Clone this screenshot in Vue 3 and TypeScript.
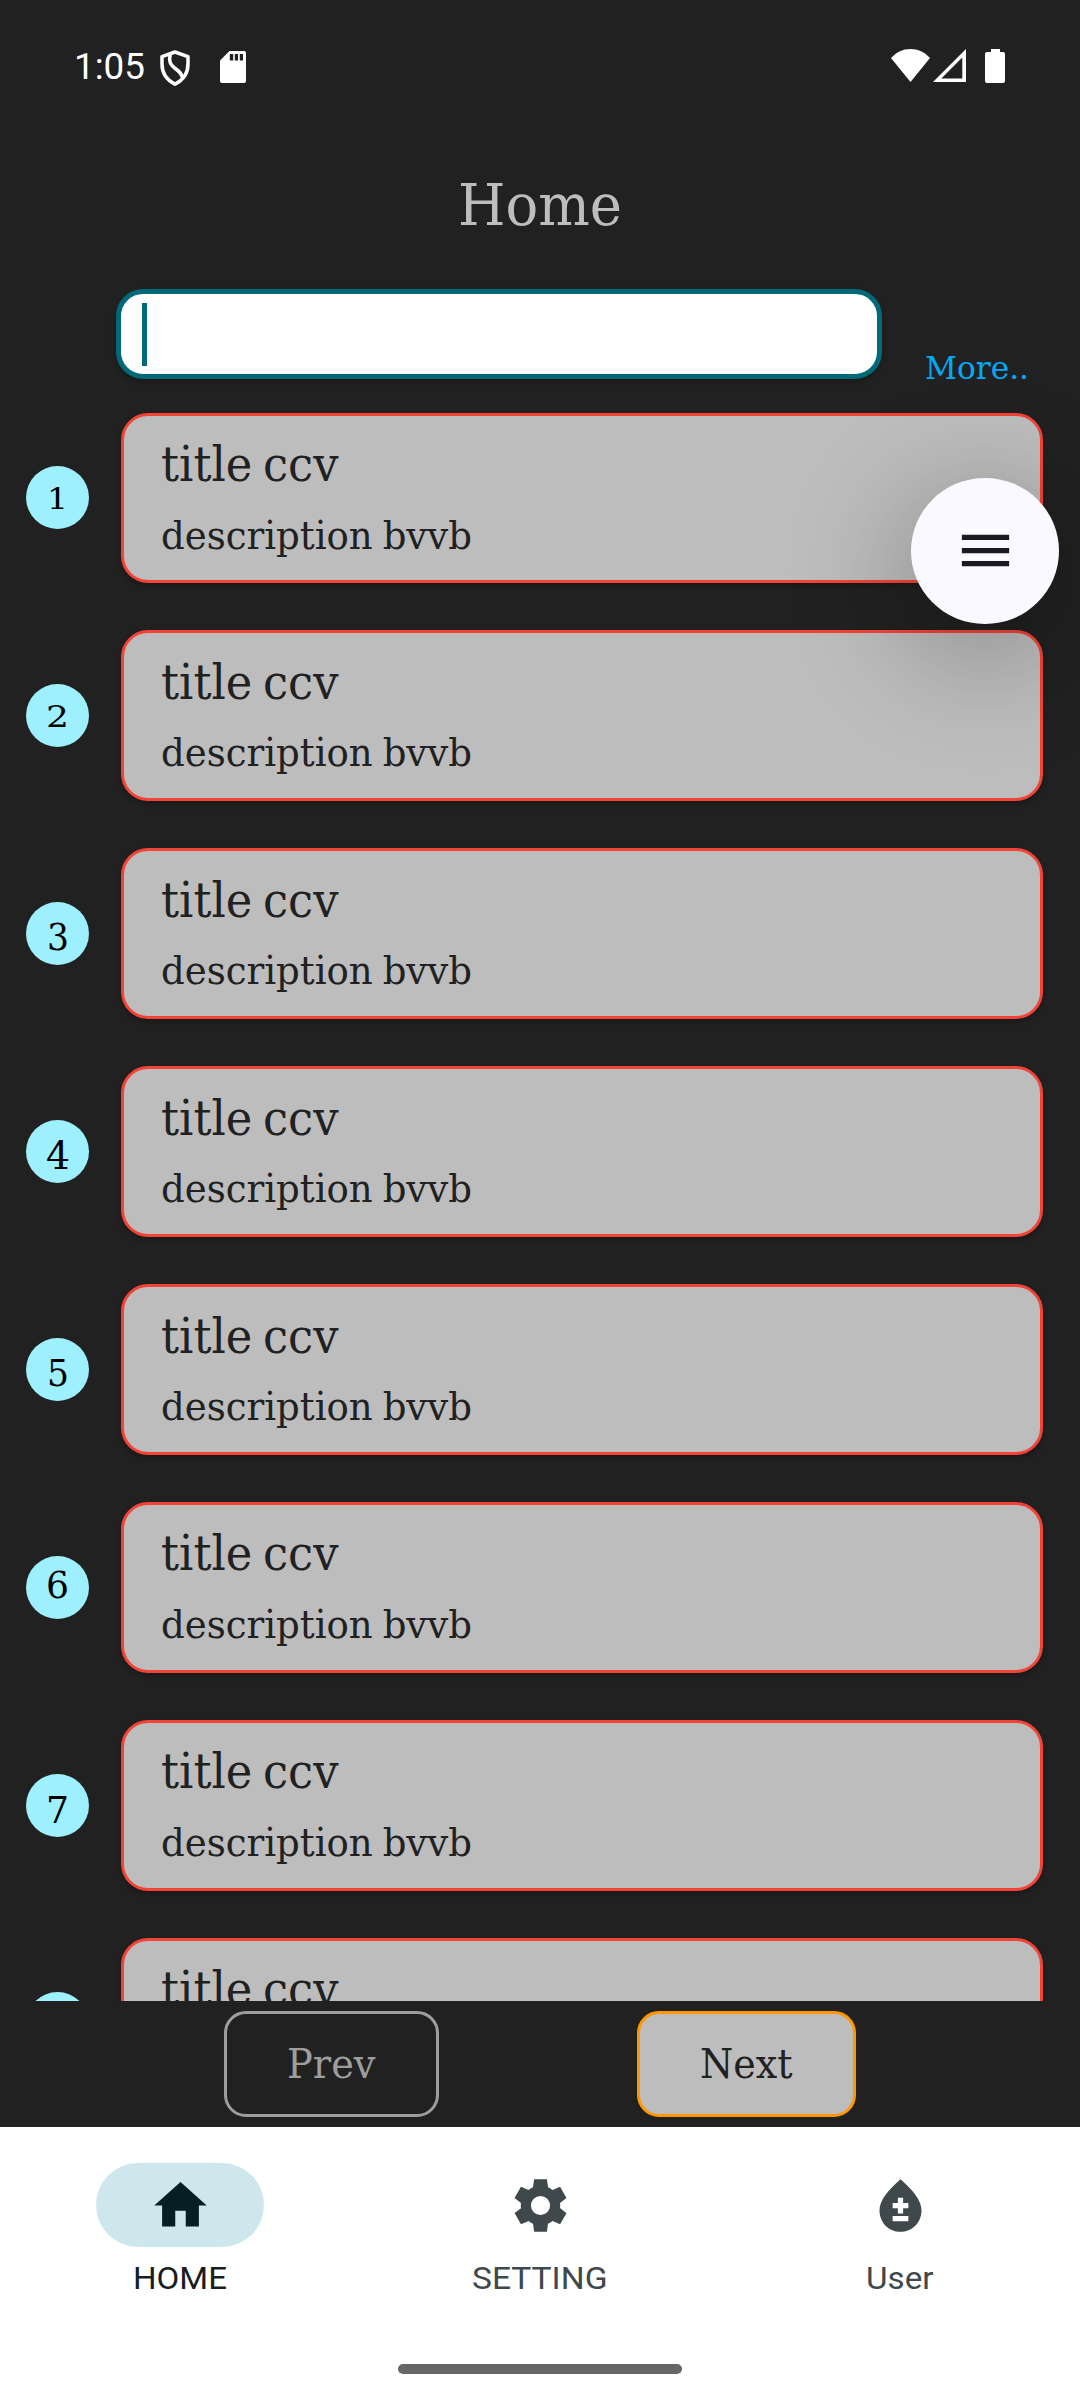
<script setup lang="ts">
import { h } from 'vue'

interface FitProps {
  text: string
  w: number
  size: number
  gap?: number
  spaced?: boolean
}

// One line of text set to an exact advance width; the baseline is the bottom of the box.
const FitText = (p: FitProps) =>
  h('svg', { class: 'fit', width: p.w, height: p.size }, [
    h(
      'text',
      {
        x: 0,
        y: p.size,
        'font-size': p.size,
        'word-spacing': p.gap ?? 0,
        textLength: p.w,
        lengthAdjust: p.spaced ? 'spacing' : 'spacingAndGlyphs',
        fill: 'currentColor',
      },
      p.text,
    ),
  ])
FitText.props = ['text', 'w', 'size', 'gap', 'spaced']

interface Row {
  n: string
  w: number
  size: number
  base: number
  peek?: boolean
}

// Old-style numerals: 1 and 2 are short, 3 4 5 7 hang below the baseline.
const rows: Row[] = [
  { n: '1', w: 21, size: 30.5, base: 11 },
  { n: '2', w: 23, size: 30.5, base: 11 },
  { n: '3', w: 22, size: 37, base: 16.5 },
  { n: '4', w: 24, size: 39, base: 17 },
  { n: '5', w: 22, size: 37.5, base: 16.5 },
  { n: '6', w: 23, size: 36.5, base: 10.5 },
  { n: '7', w: 23, size: 37.5, base: 17 },
  { n: '8', w: 22, size: 36.5, base: 11, peek: true },
]
</script>

<template>
  <div class="screen">
    <div class="status">
      <div class="status-left">
        <FitText class="sans" text="1:05" :w="71" :size="37.5" />
        <svg class="shield" width="30" height="36" viewBox="0 0 30 36" fill="none" stroke="#fff" stroke-width="3.5">
          <path d="M15 2 28 6.6V14c0 8-3.800 15.500-13 20.200C5.800 29.500 2 22 2 14V6.600z" stroke-linejoin="round" />
          <path d="M10.200 4.500C8.800 10 9.600 14.500 14.500 18c4.300 3 7 5 7.800 9.500" />
        </svg>
        <svg class="sd" width="26" height="32" viewBox="0 0 26 32">
          <path d="M9.500 0H24a2 2 0 0 1 2 2v28a2 2 0 0 1-2 2H2a2 2 0 0 1-2-2V9.500z" fill="#fff" />
          <path d="M9.800 3h3.400v6.500H9.800zM14.800 3h3.200v6.500h-3.200zM19.800 3H23v6.500h-3.200z" fill="#212121" />
        </svg>
      </div>
      <div class="status-right">
        <svg width="39" height="33" viewBox="0 0 39 33">
          <path d="M0 9C5.500 3 12 0 19.500 0S33.500 3 39 9L19.500 33z" fill="#fff" />
        </svg>
        <svg class="signal" width="33" height="33" viewBox="0 0 33 33">
          <path d="M33 0v33H0zM29.300 8.500 8.300 29.500h21z" fill="#fff" fill-rule="evenodd" />
        </svg>
        <svg class="battery" width="20" height="34" viewBox="0 0 20 34">
          <path d="M6 0h9v3h3a2 2 0 0 1 2 2v27a2 2 0 0 1-2 2H2a2 2 0 0 1-2-2V5a2 2 0 0 1 2-2h4z" fill="#fff" />
        </svg>
      </div>
    </div>

    <header class="title-bar"><FitText text="Home" :w="164" :size="57.5" /></header>

    <div class="search-row">
      <div class="search"><i class="caret"></i></div>
      <FitText class="more" text="More.." :w="104" :size="31.5" />
    </div>

    <main class="list">
      <div v-for="r in rows" :key="r.n" class="row">
        <div class="avatar">
          <FitText
            v-if="!r.peek"
            :text="r.n"
            :w="r.w"
            :size="r.size"
            :style="{ marginTop: 31.5 + r.base - r.size + 'px' }"
          />
        </div>
        <section class="card">
          <FitText text="title ccv" :w="177.5" :size="48.5" :gap="-4" />
          <FitText v-if="!r.peek" class="desc" text="description bvvb" :w="311" :size="39" :gap="-2" />
        </section>
      </div>
    </main>

    <div class="pager">
      <button class="btn prev"><FitText text="Prev" :w="88.5" :size="41" /></button>
      <button class="btn next"><FitText text="Next" :w="92.5" :size="41" /></button>
    </div>

    <nav class="nav">
      <div class="tab active">
        <span class="pill">
          <svg width="63" height="63" viewBox="0 0 24 24"><path d="M10 20v-6h4v6h5v-8h3L12 3 2 12h3v8z" /></svg>
        </span>
        <FitText class="sans label" text="HOME" :w="94" :size="31" spaced />
      </div>
      <div class="tab">
        <span class="pill">
          <svg width="63" height="63" viewBox="0 0 24 24">
            <path
              d="M19.440 12.990c.040-.320.070-.650.070-.990s-.030-.660-.070-.990l2.450-1.900-2.430-4.220-2.870 1.160c-.520-.400-1.090-.740-1.700-1L14.440 2H9.570l-.440 3.070c-.620.260-1.190.600-1.710 1L4.550 4.890 2.110 9.110l2.440 1.920c-.040.310-.060.630-.060.970 0 .340.030.680.080 1.010l-2.440 1.890 2.430 4.200 2.880-1.150c.530.410 1.080.720 1.710.980L9.580 22h4.850l.440-3.070c.620-.260 1.200-.600 1.730-1.010l2.860 1.190 2.430-4.200-2.450-1.920zM12 15.650a3.650 3.650 0 1 1 0-7.300 3.650 3.650 0 0 1 0 7.300z"
            />
          </svg>
        </span>
        <FitText class="sans label" text="SETTING" :w="135.5" :size="31" spaced />
      </div>
      <div class="tab">
        <span class="pill">
          <svg width="63" height="63" viewBox="0 0 24 24">
            <path
              d="M12 2c-5.330 4.550-8 8.480-8 11.800C4 18.780 7.800 22 12 22s8-3.220 8-8.200C20 10.480 17.330 6.550 12 2zm3 16H9v-2h6v2zm0-5h-2v2h-2v-2H9v-2h2V9h2v2h2v2z"
            />
          </svg>
        </span>
        <FitText class="sans label" text="User" :w="67.5" :size="31" spaced />
      </div>
      <i class="gesture"></i>
    </nav>

    <div class="fab">
      <svg width="63" height="63" viewBox="0 0 24 24"><path d="M3 18h18v-2H3v2zm0-5h18v-2H3v2zm0-7v2h18V6H3z" /></svg>
    </div>
  </div>
</template>

<style>
body {
  margin: 0;
  background: #212121;
}
</style>

<style scoped>
.screen {
  position: relative;
  display: flex;
  flex-direction: column;
  width: 1080px;
  height: 2400px;
  overflow: hidden;
  background: #212121;
  color: #212121;
  font-family: 'DejaVu Serif', serif;
}
svg {
  display: block;
  flex: none;
}
.fit {
  overflow: visible;
}
.sans {
  font-family: Roboto, sans-serif;
}
.status {
  box-sizing: border-box;
  height: 140px;
  padding: 0 75px 0 74px;
  display: flex;
  justify-content: space-between;
  color: #fff;
}
.status-left,
.status-right {
  display: flex;
  align-items: flex-start;
}
.status-left {
  padding-top: 41px;
}
.shield {
  margin: 9px 0 0 15px;
}
.sd {
  margin: 10px 0 0 30px;
}
.status-right {
  padding-top: 49px;
}
.signal {
  margin-left: 3px;
}
.battery {
  margin-left: 19px;
}
.title-bar {
  height: 84px;
  display: flex;
  justify-content: center;
  align-items: flex-end;
  color: #bdbdbd;
}
.search-row {
  display: flex;
  height: 89.5px;
  padding: 65px 0 0 115.500px;
  align-items: flex-end;
}
.search {
  box-sizing: border-box;
  width: 766.5px;
  height: 89.5px;
  border: 5px solid #006876;
  border-radius: 27px;
  background: #fff;
  padding: 9px 21px;
  box-shadow: 0 3px 5px rgba(0, 0, 0, 0.25);
}
.caret {
  display: block;
  width: 5.5px;
  height: 63px;
  background: #006876;
}
.more {
  margin-left: 42.5px;
  color: #03a9f4;
}
.list {
  height: 1622px;
  overflow: hidden;
}
.row {
  display: flex;
  align-items: center;
  height: 170.875px;
  margin-bottom: 47px;
  padding-left: 26px;
}
.row:first-child {
  margin-top: 34px;
}
.avatar {
  display: flex;
  justify-content: center;
  align-items: flex-start;
  width: 63px;
  height: 63px;
  border-radius: 50%;
  background: #9ef0ff;
  color: #000;
}
.card {
  box-sizing: border-box;
  width: 922.5px;
  height: 170.875px;
  margin-left: 31.5px;
  padding: 16.500px 0 0 37px;
  border: 3px solid #f44336;
  border-radius: 27px;
  background: #bdbdbd;
  box-shadow: 0 3px 5px rgba(0, 0, 0, 0.25);
}
.desc {
  margin-top: 29px;
}
.pager {
  box-sizing: border-box;
  height: 126px;
  padding: 10px 0 0 223.500px;
  display: flex;
  gap: 197.5px;
}
.btn {
  box-sizing: border-box;
  height: 106px;
  margin: 0;
  padding: 23px 0 0;
  display: flex;
  justify-content: center;
  align-items: flex-start;
  border: 3px solid #9e9e9e;
  border-radius: 22px;
  background: none;
  color: #9e9e9e;
  font-family: inherit;
}
.prev {
  width: 215.5px;
}
.next {
  width: 219.5px;
  border-color: #ff9800;
  background: #bdbdbd;
  color: #212121;
}
.nav {
  position: relative;
  display: flex;
  height: 273px;
  background: #fff;
}
.tab {
  width: 360px;
  padding-top: 36.5px;
  display: flex;
  flex-direction: column;
  align-items: center;
  color: #3f484a;
  fill: #3f484a;
}
.active {
  color: #171d1e;
  fill: #051f24;
}
.pill {
  display: flex;
  align-items: center;
  justify-content: center;
  width: 168px;
  height: 84px;
  border-radius: 42px;
}
.active .pill {
  background: #cde7ec;
}
.label {
  margin-top: 11px;
}
.gesture {
  position: absolute;
  left: 398px;
  top: 237px;
  width: 284px;
  height: 10px;
  border-radius: 5px;
  background: #666;
}
.fab {
  position: absolute;
  left: 911px;
  top: 477.5px;
  width: 148px;
  height: 146.5px;
  display: flex;
  align-items: center;
  justify-content: center;
  border-radius: 50%;
  background: #f9f9ff;
  fill: #1a1b21;
  box-shadow: 0 26px 110px 20px rgba(0, 0, 0, 0.22);
}
</style>
